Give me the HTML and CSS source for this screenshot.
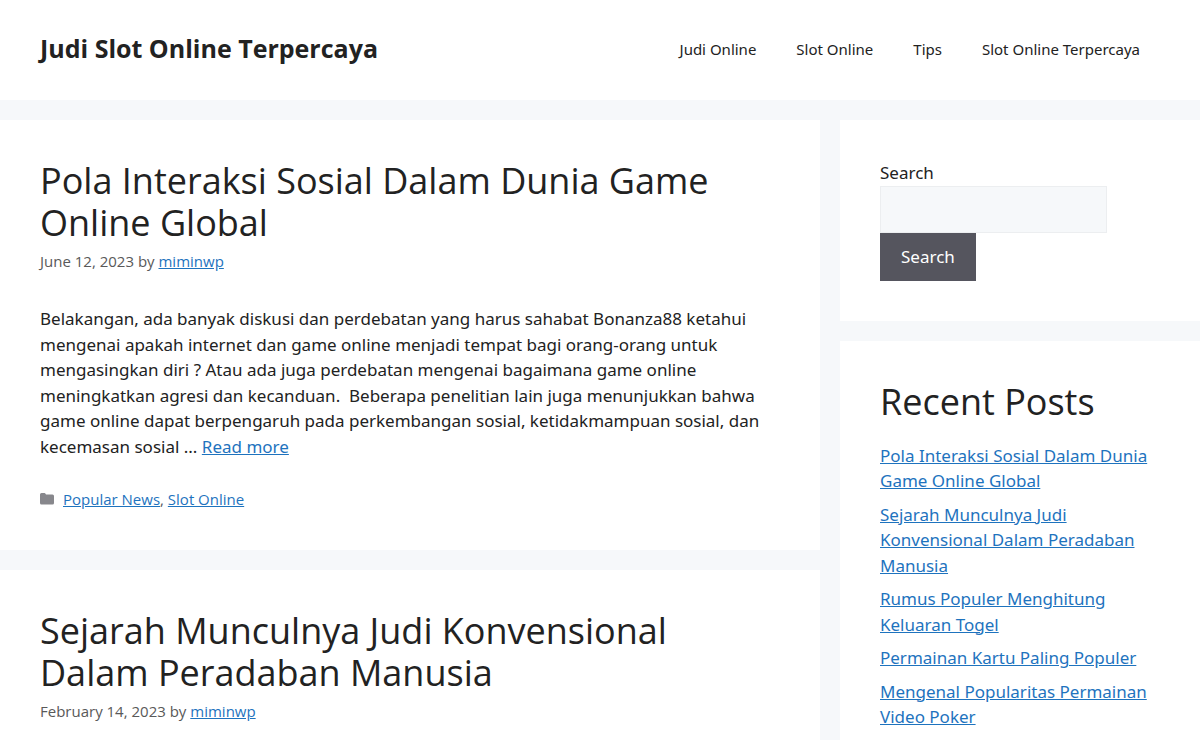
FILE: index.html
```html
<!DOCTYPE html>
<html lang="id">
<head>
    <meta charset="UTF-8">
    <meta name="viewport" content="width=device-width, initial-scale=1.0">
    <title>Judi Slot Online Terpercaya</title>
    <link rel="stylesheet" href="styles.css">
</head>
<body>
    <header class="site-header">
        <a class="site-title" href="#">Judi Slot Online Terpercaya</a>
        <nav class="main-nav">
            <a href="#">Judi Online</a>
            <a href="#">Slot Online</a>
            <a href="#">Tips</a>
            <a href="#">Slot Online Terpercaya</a>
        </nav>
    </header>

    <div class="site-content">
        <main class="posts">
            <article class="box">
                <h2 class="entry-title"><a href="#">Pola Interaksi Sosial Dalam Dunia Game Online Global</a></h2>
                <div class="entry-meta">June 12, 2023 by <a href="#">miminwp</a></div>
                <p class="entry-summary">Belakangan, ada banyak diskusi dan perdebatan yang harus sahabat Bonanza88 ketahui mengenai apakah internet dan game online menjadi tempat bagi orang-orang untuk mengasingkan diri ? Atau ada juga perdebatan mengenai bagaimana game online meningkatkan agresi dan kecanduan.&nbsp; Beberapa penelitian lain juga menunjukkan bahwa game online dapat berpengaruh pada perkembangan sosial, ketidakmampuan sosial, dan kecemasan sosial ... <a href="#">Read more</a></p>
                <footer class="entry-footer">
                    <svg class="icon" viewBox="0 0 14 12" aria-hidden="true"><path d="M0 1.500Q0 0 1.500 0h3Q5.200 0 5.500.8L6 1.500h6.500q1.500 0 1.500 1.500v7q0 1.500-1.500 1.500h-11Q0 11.500 0 10z"/></svg>
                    <span><a href="#">Popular News</a>, <a href="#">Slot Online</a></span>
                </footer>
            </article>

            <article class="box">
                <h2 class="entry-title"><a href="#">Sejarah Munculnya Judi Konvensional Dalam Peradaban Manusia</a></h2>
                <div class="entry-meta">February 14, 2023 by <a href="#">miminwp</a></div>
            </article>
        </main>

        <aside class="sidebar">
            <section class="box">
                <form class="search-form">
                    <label for="search">Search</label>
                    <input type="search" id="search">
                    <button type="submit">Search</button>
                </form>
            </section>

            <section class="box">
                <h2 class="widget-title">Recent Posts</h2>
                <ul class="recent-posts">
                    <li><a href="#">Pola Interaksi Sosial Dalam Dunia Game Online Global</a></li>
                    <li><a href="#">Sejarah Munculnya Judi Konvensional Dalam Peradaban Manusia</a></li>
                    <li><a href="#">Rumus Populer Menghitung Keluaran Togel</a></li>
                    <li><a href="#">Permainan Kartu Paling Populer</a></li>
                    <li><a href="#">Mengenal Popularitas Permainan Video Poker</a></li>
                </ul>
            </section>
        </aside>
    </div>
</body>
</html>
```
FILE: styles.css
```css
* {
    box-sizing: border-box;
}
body {
    margin: 0;
    background-color: #f6f8fa;
    color: #222;
    font-family: "Noto Sans", "Open Sans", sans-serif;
    font-size: 17px;
    line-height: 1.5;
}
a {
    color: #1e73be;
}
.site-header {
    display: flex;
    align-items: center;
    justify-content: space-between;
    min-height: 100px;
    padding: 0 40px 2px;
    background: white;
}
.site-title {
    color: #222;
    font-family: "Open Sans", sans-serif;
    font-size: 25px;
    font-weight: bold;
    text-decoration: none;
}
.main-nav {
    display: flex;
    gap: 40px;
    padding-right: 20px;
}
.main-nav a {
    color: #222;
    font-size: 15px;
    text-decoration: none;
}
.site-content {
    display: grid;
    grid-template-columns: minmax(0, 7fr) minmax(0, 3fr);
    padding-top: 20px;
}
.posts {
    margin-right: 20px;
}
.box {
    margin-bottom: 20px;
    padding: 40px;
    background: white;
}
.entry-title, .widget-title {
    margin: 0;
    font-family: "Open Sans", sans-serif;
    font-size: 36px;
    font-weight: normal;
    line-height: 42px;
}
.entry-title a {
    color: #222;
    text-decoration: none;
}
.entry-meta, .entry-footer {
    color: #595959;
    font-family: "Open Sans", sans-serif;
    font-size: 15px;
    line-height: 22px;
}
.entry-meta {
    margin-top: 6px;
}
.entry-summary {
    margin: 34px 0 29px;
}
.entry-footer {
    display: flex;
    align-items: center;
    gap: 9px;
}
.icon {
    width: 14px;
    height: 12px;
    fill: #87878c;
}
.search-form label {
    display: block;
}
.search-form input {
    display: block;
    width: 227px;
    max-width: 100%;
    height: 47px;
    padding: 10px 15px;
    border: 1px solid #eceef0;
    background: #f6f8fa;
    font: inherit;
}
.search-form button {
    display: block;
    height: 48px;
    padding: 0 21px;
    border: none;
    background-color: #55555e;
    color: white;
    font: inherit;
    cursor: pointer;
}
.widget-title {
    margin-bottom: 20px;
}
.recent-posts {
    margin: 0;
    padding: 0;
    list-style: none;
}
.recent-posts li {
    margin-bottom: 8px;
}
```
